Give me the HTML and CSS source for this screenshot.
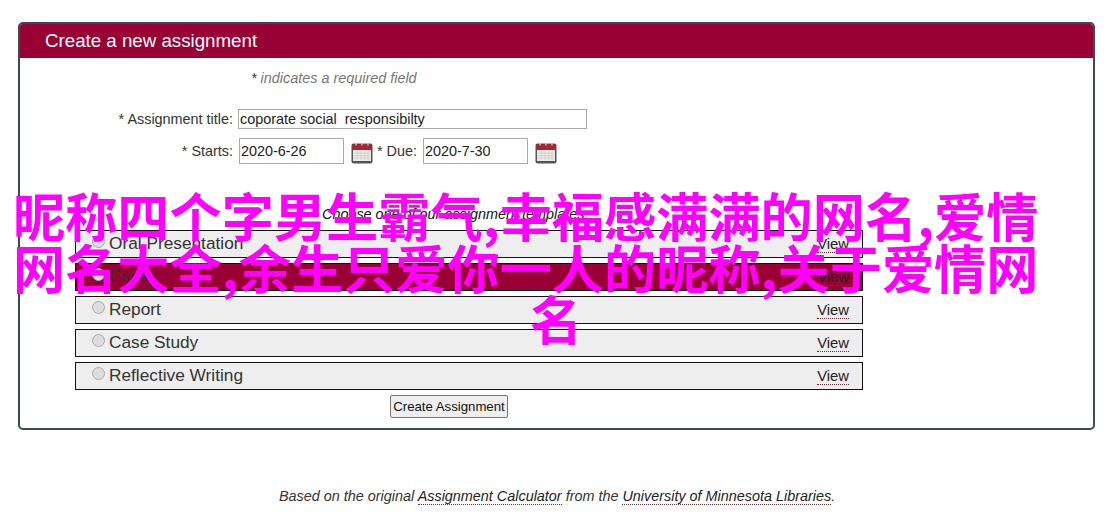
FILE: index.html
```html
<!DOCTYPE html>
<html lang="en">
<head>
<meta charset="utf-8">
<title>Create a new assignment</title>
<link rel="stylesheet" href="styles.css">
</head>
<body>
<svg class="sprite" width="0" height="0" aria-hidden="true">
  <symbol id="cal" viewBox="0 0 22 22">
    <rect x="0.5" y="1.5" width="21" height="20" rx="2" fill="#555"/>
    <rect x="1.5" y="2" width="19" height="6" fill="#a5242f"/>
    <rect x="2" y="8" width="18" height="11" fill="#e9e9e6"/>
    <path d="M5 0.500v3M11 0.500v3M17 0.500v3" stroke="#d9d9d9" stroke-width="1.200"/>
    <path d="M3 11h16M3 13.500h16M3 16h16M6 9v9M10 9v9M14 9v9M17 9v9" stroke="#cfcfcd" stroke-width="0.800"/>
  </symbol>
</svg>
<main class="panel">
  <h1 class="panel-title">Create a new assignment</h1>
  <p class="required"><span class="star">*</span> indicates a required field</p>
  <div class="field field-title">
    <label class="label">* Assignment title:</label>
    <input class="input input-title" type="text" value="coporate social  responsibilty">
  </div>
  <div class="field field-dates">
    <label class="label">* Starts:</label>
    <input class="input input-date" type="text" value="2020-6-26">
    <svg class="cal"><use href="#cal"/></svg>
    <label class="label-due">* Due:</label>
    <input class="input input-date" type="text" value="2020-7-30">
    <svg class="cal"><use href="#cal"/></svg>
  </div>
  <p class="choose">Choose one of our assignment templates:</p>
  <ul class="templates">
    <li class="template"><span class="radio"></span><span class="name">Oral Presentation</span><a class="view" href="#">View</a></li>
    <li class="template selected"><span class="radio radio-on"></span><span class="name">Essay</span><a class="view" href="#">View</a></li>
    <li class="template"><span class="radio"></span><span class="name">Report</span><a class="view" href="#">View</a></li>
    <li class="template"><span class="radio"></span><span class="name">Case Study</span><a class="view" href="#">View</a></li>
    <li class="template"><span class="radio"></span><span class="name">Reflective Writing</span><a class="view" href="#">View</a></li>
  </ul>
  <div class="actions"><button class="submit" type="button">Create Assignment</button></div>
</main>
<p class="credit">Based on the original <a href="#">Assignment Calculator</a> from the <a href="#">University of Minnesota Libraries</a>.</p>
<div class="overlay">
  <div class="line">昵称四个字男生霸气,幸福感满满的网名,爱情</div>
  <div class="line">网名大全,余生只爱你一人的昵称,关于爱情网</div>
  <div class="line line-last">名</div>
</div>
</body>
</html>
```
FILE: styles.css
```css
* { box-sizing: border-box; }
html, body { margin: 0; padding: 0; }
body {
  position: relative;
  height: 526px;
  overflow: hidden;
  background: #fff;
  color: #333;
  font-family: "Liberation Sans", Arial, sans-serif;
  font-size: 14.4px;
  padding-top: 22px;
}
.sprite { position: absolute; }
.panel {
  width: 1077px;
  height: 408px;
  margin-left: 18px;
  border: 2px solid #3a4a56;
  border-radius: 5px;
  overflow: hidden;
}
.panel-title {
  margin: 0;
  height: 34px;
  padding-left: 25px;
  background: #990033;
  color: #fff;
  font-size: 18.72px;
  font-weight: 400;
  line-height: 34px;
}
.required {
  margin: 12px 0 0 231px;
  height: 17px;
  line-height: 17px;
  font-style: italic;
  color: #777;
}
.star { color: #333; }
.field { display: flex; align-items: center; }
.field-title { margin-top: 22px; height: 20px; }
.field-dates { margin-top: 9px; height: 26px; }
.label { width: 213px; text-align: right; white-space: nowrap; }
.input {
  height: 100%;
  border: 1px solid #aaa;
  background: #fff;
  color: #222;
  font-family: "Liberation Sans", Arial, sans-serif;
  font-size: 14.4px;
  padding: 0 1px;
  outline: none;
}
.input-title { width: 349px; margin-left: 5px; }
.input-date { width: 105px; margin-left: 6px; }
.label-due { margin-left: 4px; }
.label-due + .input-date { margin-left: 6px; }
.cal { width: 22px; height: 22px; margin: 3px 0 0 7px; flex: none; }
.choose {
  margin: 42px 0 0 302px;
  height: 16px;
  line-height: 16px;
  font-style: italic;
  color: #111;
}
.templates {
  list-style: none;
  margin: 8px 0 0 55px;
  padding: 0;
  width: 788px;
  display: flex;
  flex-direction: column;
  gap: 5px;
}
.template {
  height: 28px;
  border: 1px solid #111;
  background: #eee;
  display: flex;
  align-items: center;
  padding: 0 13px 0 16px;
  font-size: 17.28px;
  color: #333;
}
.template.selected { background: #990033; }
.radio {
  width: 13px;
  height: 13px;
  margin-right: 4px;
  margin-top: -5px;
  border-radius: 50%;
  border: 1px solid #aaa;
  background: #ddd;
  flex: none;
}
.radio-on { background: #fff; box-shadow: inset 0 0 0 3px #ddd; }
.name { flex: 1; line-height: 20px; margin-top: -2px; }
.view {
  color: #222;
  font-size: 14.8px;
  text-decoration: none;
  border-bottom: 1px dotted #7a2a2a;
  line-height: 15px;
  margin-top: 2px;
}
.actions { margin-top: 5px; padding-left: 370px; }
.submit {
  width: 118px;
  height: 23px;
  padding: 0;
  border: 1px solid #767676;
  border-radius: 2px;
  background: #efefef;
  color: #111;
  font-family: "Liberation Sans", Arial, sans-serif;
  font-size: 13.2px;
}
.credit {
  margin: 58px 0 0 279px;
  line-height: 16px;
  font-size: 14.4px;
  font-style: italic;
  color: #333;
}
.credit a {
  color: #222;
  text-decoration: none;
  border-bottom: 1px dotted #7a2a2a;
}
.overlay {
  position: absolute;
  left: 13px;
  top: 189px;
  width: 1086px;
  color: #ff00ff;
  font-family: "Noto Sans CJK SC", "Liberation Sans", sans-serif;
  font-size: 52.2px;
  font-weight: 700;
  line-height: 51.5px;
  white-space: nowrap;
}
.line-last { text-align: center; }
```
